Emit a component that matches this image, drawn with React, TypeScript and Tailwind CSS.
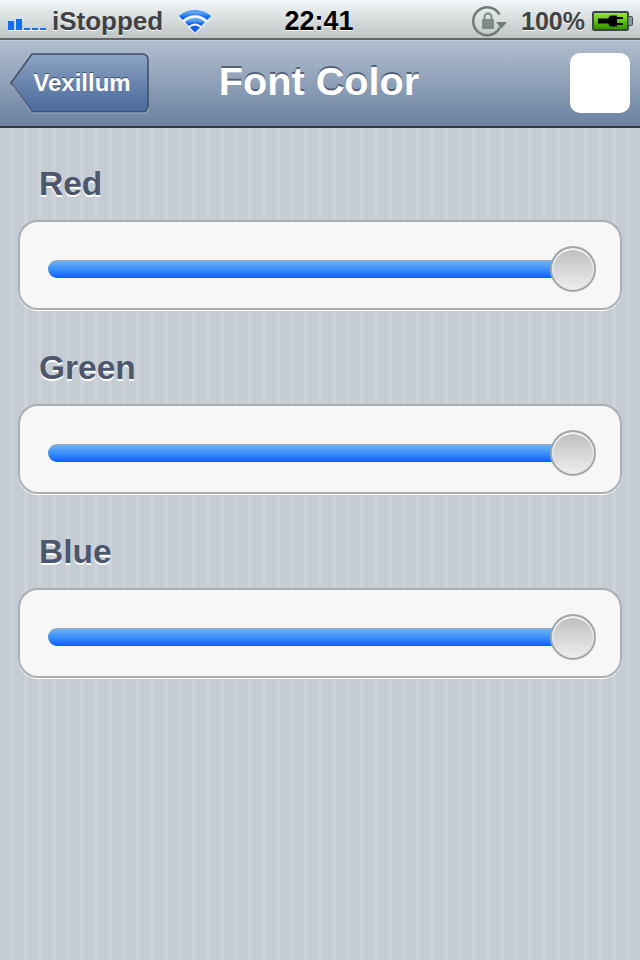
import React from 'react';

const channels = ['Red', 'Green', 'Blue'];

const SignalIcon = () => (
  <svg width="40" height="14" viewBox="0 0 40 14" className="shrink-0">
    <rect x="0" y="4" width="6" height="9" fill="#0f6ef0" />
    <rect x="8" y="2" width="6" height="11" fill="#0f6ef0" />
    <rect x="16" y="11" width="6" height="2" fill="#0f6ef0" />
    <rect x="24" y="11" width="6" height="2" fill="#0f6ef0" />
    <rect x="32" y="11" width="6" height="2" fill="#0f6ef0" />
    <rect x="0" y="13" width="38" height="1" fill="#ffffff" opacity="0.7" />
  </svg>
);

const WifiIcon = () => (
  <svg width="34" height="26" viewBox="0 0 34 26" className="shrink-0">
    <defs>
      <linearGradient id="wifiBlue" x1="0" y1="0" x2="0" y2="1">
        <stop offset="0" stopColor="#5aa6f2" />
        <stop offset="1" stopColor="#0a5ff0" />
      </linearGradient>
    </defs>
    <path d="M17 26L0 9C9 -1 25 -1 34 9Z" fill="#ffffff" opacity="0.75" />
    <path d="M17 24.500L12 19.500C15 17 19 17 22 19.500Z" fill="#0a5ff0" />
    <g fill="none" stroke="url(#wifiBlue)" strokeWidth="5.500">
      <path d="M2.800 10C10.500 2.500 23.500 2.500 31.200 10" />
      <path d="M8.800 16C13.300 11.500 20.700 11.500 25.200 16" />
    </g>
  </svg>
);

const RotationLockIcon = () => (
  <svg width="36" height="32" viewBox="0 0 36 32" className="shrink-0">
    <path d="M28 22A14 14 0 1 1 27.500 9.500" fill="none" stroke="#6f7b79" strokeWidth="2.500" />
    <path d="M24 17H35L29.500 23.500Z" fill="#6f7b79" />
    <rect x="10" y="14" width="12" height="10" rx="1" fill="#7d8a88" />
    <path d="M12.500 14.500V12A3.500 3.500 0 0 1 19.500 12V14.500" fill="none" stroke="#7d8a88" strokeWidth="2" />
  </svg>
);

const BatteryIcon = () => (
  <svg width="42" height="20" viewBox="0 0 42 20" className="shrink-0">
    <defs>
      <linearGradient id="batteryGreen" x1="0" y1="0" x2="0" y2="1">
        <stop offset="0" stopColor="#a4e83a" />
        <stop offset="0.5" stopColor="#62c412" />
        <stop offset="1" stopColor="#2c8a06" />
      </linearGradient>
    </defs>
    <rect x="1" y="1" width="35" height="18" rx="1.500" fill="url(#batteryGreen)" stroke="#3c4650" strokeWidth="2" />
    <rect x="36" y="5.500" width="4.500" height="9" rx="1" fill="#8a97a3" stroke="#3c4650" strokeWidth="1" />
    <path d="M6 7.500H16L18 4.500H25V6H31V8H25V12H31V14H25V15.500H18L16 12.500H6Z" fill="#000000" />
  </svg>
);

const BackButtonShape = () => (
  <svg width="140" height="61" viewBox="0 0 140 61" className="absolute left-0 top-0">
    <defs>
      <linearGradient id="backFill" x1="0" y1="0" x2="0" y2="1">
        <stop offset="0" stopColor="#8ea4c2" />
        <stop offset="1" stopColor="#47689a" />
      </linearGradient>
    </defs>
    <path d="M1 30L22 1H132Q138 1 138 7V53Q138 59 132 59H22Z" fill="url(#backFill)" stroke="#3d4d63" strokeWidth="1.500" />
    <path d="M2 32L22 60H132Q138 60 138.500 55" fill="none" stroke="#a3b2c6" strokeWidth="1" />
  </svg>
);

const Slider = () => (
  <div className="flex h-[90px] items-center rounded-[20px] border-2 border-[#a9adb4] bg-[#f7f7f7] pl-[28px] pr-[24px] pt-[8px] shadow-[0_1px_0_#ffffff]">
    <div className="h-[18px] flex-1 rounded-full border-t border-[#9aa6b2] bg-gradient-to-b from-[#6ab4f4] to-[#0760fd]" />
    <div className="-ml-[24px] flex h-[46px] w-[46px] shrink-0 rounded-full border-2 border-[#a4a6a8] bg-gradient-to-b from-[#bebebe] to-[#eeeeee] shadow-[inset_0_1px_0_1px_#f4f4f4]" />
  </div>
);

export default function App() {
  return (
    <div className="flex min-h-[960px] w-[640px] flex-col overflow-hidden bg-[repeating-linear-gradient(90deg,#c5ccd4_0,#c5ccd4_10px,#cbd2d8_10px,#cbd2d8_14px)] font-['Liberation_Sans',Arial,sans-serif] antialiased">
      {/* status bar */}
      <div className="grid h-[40px] grid-cols-[1fr_auto_1fr] items-center border-b-2 border-[#62666a] bg-gradient-to-b from-[#f1f6f8] to-[#bfc4c4] pl-[8px] pr-[6px] text-[26px] font-bold text-[#3f4143] [text-shadow:0_1px_0_#ffffff]">
        <div className="flex items-center">
          <div className="mt-[6px]">
            <SignalIcon />
          </div>
          <span className="ml-[4px] pt-[1px]">iStopped</span>
          <div className="ml-[15px]">
            <WifiIcon />
          </div>
        </div>
        <span className="mr-[4px] pt-[1px] text-[27px] text-[#000000]">22:41</span>
        <div className="flex items-center justify-end">
          <RotationLockIcon />
          <span className="ml-[13px] pt-[1px] text-[25px]">100%</span>
          <div className="ml-[7px]">
            <BatteryIcon />
          </div>
        </div>
      </div>

      {/* nav bar */}
      <div className="grid h-[88px] grid-cols-[1fr_auto_1fr] items-center border-b-2 border-[#2d3642] bg-gradient-to-b from-[#b3bfd0] to-[#6b82a1] pl-[10px] pr-[10px] shadow-[inset_0_1px_0_#c4cedb]">
        <div className="flex">
          <button className="relative h-[61px] w-[140px] pl-[4px] text-[24px] font-bold text-white [text-shadow:0_-1px_0_rgba(30,45,70,0.7)]">
            <BackButtonShape />
            <span className="relative">Vexillum</span>
          </button>
        </div>
        <h1 className="mb-[2px] mr-[2px] text-[39.7px] font-bold text-white [text-shadow:0_-2px_0_rgba(40,50,70,0.6)]">Font Color</h1>
        <div className="flex justify-end">
          <div className="h-[60px] w-[60px] rounded-[10px] bg-white" />
        </div>
      </div>

      {/* color channels */}
      <div className="flex flex-col gap-[38px] px-[18px] pt-[36px]">
        {channels.map((name) => (
          <div key={name} className="flex flex-col gap-[16px]">
            <div className="pl-[21px] text-[33.5px] leading-[40px] font-bold text-[#4c566c] [text-shadow:0_2px_0_#ffffff]">{name}</div>
            <Slider />
          </div>
        ))}
      </div>
    </div>
  );
}
